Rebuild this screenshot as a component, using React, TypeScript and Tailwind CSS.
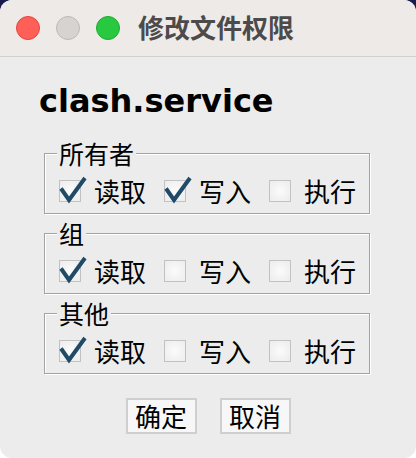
import React from "react"

const cjk = { fontFamily: '"Noto Sans CJK SC", "Noto Sans", sans-serif' }

type Perm = { label: string; checked: boolean }

const groups: { title: string; perms: Perm[] }[] = [
  {
    title: "所有者",
    perms: [
      { label: "读取", checked: true },
      { label: "写入", checked: true },
      { label: "执行", checked: false },
    ],
  },
  {
    title: "组",
    perms: [
      { label: "读取", checked: true },
      { label: "写入", checked: false },
      { label: "执行", checked: false },
    ],
  },
  {
    title: "其他",
    perms: [
      { label: "读取", checked: true },
      { label: "写入", checked: false },
      { label: "执行", checked: false },
    ],
  },
]

function CheckBox({ checked }: { checked: boolean }) {
  return (
    <span className="relative block h-[22px] w-[22px] shrink-0 border border-[#c2c2c2] bg-[radial-gradient(circle,#fbfbfb_0%,#ececec_100%)]">
      {checked && (
        <svg
          className="absolute left-0 top-0 overflow-visible"
          width="22"
          height="22"
          viewBox="0 0 22 22"
        >
          <path
            d="M1 7.5 L9 19 L25 -3"
            fill="none"
            stroke="#1f4a68"
            strokeWidth="4"
            strokeLinejoin="miter"
          />
        </svg>
      )}
    </span>
  )
}

function Group({ title, perms }: { title: string; perms: Perm[] }) {
  return (
    <fieldset className="ml-[44px] w-[326px] min-w-0 border border-[#a3a3a3] px-[14px] pb-[8px] pt-[10px] shadow-[inset_1px_1px_0_#fff,1px_1px_0_#fff]">
      <legend className="ml-[-2px] whitespace-nowrap bg-[#ececec] px-[2px] text-[25px] leading-[28px] text-black">
        {title}
      </legend>
      <div className="flex items-center gap-[18px] whitespace-nowrap">
        {perms.map((p) => (
          <label key={p.label} className="flex shrink-0 items-center gap-[13px]">
            <CheckBox checked={p.checked} />
            <span className="text-[26px] leading-[28px] text-black">{p.label}</span>
          </label>
        ))}
      </div>
    </fieldset>
  )
}

export default function App() {
  return (
    <div className="h-[458px] w-[416px] bg-[linear-gradient(to_bottom,#191a4e_0_30px,#ffffff_30px)]" style={cjk}>
      <div className="flex h-full flex-col overflow-hidden rounded-[12px] bg-[#ececec]">
        <div className="flex h-[57px] shrink-0 items-center border-b border-[#d3d0ce] bg-[#eeeae7] pl-4">
          <span className="h-6 w-6 rounded-full border border-[#e2463f] bg-[#fe5f57]" />
          <span className="ml-4 h-6 w-6 rounded-full border border-[#bdb9b6] bg-[#d7d3d0]" />
          <span className="ml-4 h-6 w-6 rounded-full border border-[#1faa34] bg-[#28c840]" />
          <span className="ml-[18px] mt-[-2px] whitespace-nowrap text-[26px] font-bold leading-none text-[#4b4b4b]">
            修改文件权限
          </span>
        </div>

        <div
          className="ml-[39px] mt-[28px] text-[32px] font-bold leading-none text-black"
          style={{ fontFamily: '"DejaVu Sans", sans-serif' }}
        >
          clash.service
        </div>

        <div className="mt-[22px] flex flex-col gap-[5px]">
          {groups.map((g) => (
            <Group key={g.title} title={g.title} perms={g.perms} />
          ))}
        </div>

        <div className="mt-[24px] flex justify-center gap-[23px]">
          <button className="h-[36px] w-[71px] whitespace-nowrap border-2 border-[#cfcfcf] bg-[#f7f7f7] text-[26px] leading-none text-black">
            确定
          </button>
          <button className="h-[36px] w-[71px] whitespace-nowrap border-2 border-[#cfcfcf] bg-[#f7f7f7] text-[26px] leading-none text-black">
            取消
          </button>
        </div>
      </div>
    </div>
  )
}
